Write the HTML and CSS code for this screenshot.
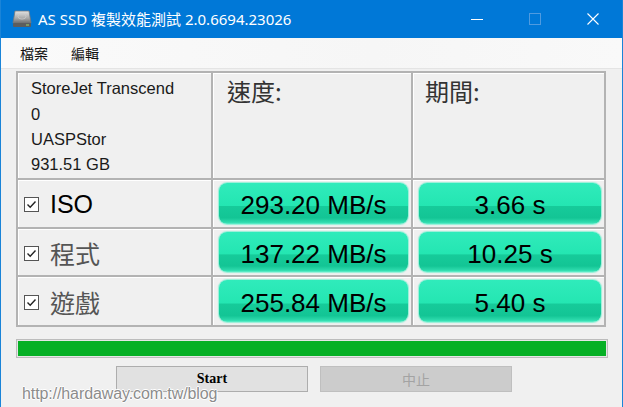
FILE: index.html
```html
<!DOCTYPE html>
<html lang="zh-Hant">
<head>
    <meta charset="UTF-8">
    <title>AS SSD 複製效能測試</title>
    <link rel="stylesheet" href="styles.css">
</head>
<body>
<div class="window">
    <div class="titlebar">
        <svg class="app-icon" width="20" height="18" viewBox="0 0 20 18">
            <defs>
                <linearGradient id="drive" x1="0" y1="0" x2="0" y2="1">
                    <stop offset="0" stop-color="#e4e4e4"/>
                    <stop offset="0.6" stop-color="#a9a9a9"/>
                    <stop offset="1" stop-color="#6f6f6f"/>
                </linearGradient>
            </defs>
            <path d="M3 1 H17 L19 13 H1 Z" fill="url(#drive)" stroke="#7a7a7a" stroke-width="0.8"/>
            <rect x="1" y="13" width="18" height="4" rx="1" fill="#5d5d5d"/>
            <rect x="14" y="14.5" width="3" height="1" fill="#9fd66a"/>
            <ellipse cx="10" cy="6.5" rx="4" ry="2.6" fill="none" stroke="#c9c9c9" stroke-width="0.8"/>
        </svg>
        <div class="title">AS SSD 複製效能測試 2.0.6694.23026</div>
        <div class="controls">
            <span class="ctl"><svg width="14" height="14" viewBox="0 0 14 14"><line x1="1" y1="7.5" x2="13" y2="7.5" stroke="#fff" stroke-width="1"/></svg></span>
            <span class="ctl"><svg width="14" height="14" viewBox="0 0 14 14"><rect x="1.5" y="1.5" width="11" height="11" fill="none" stroke="#4f9be0" stroke-width="1"/></svg></span>
            <span class="ctl"><svg width="14" height="14" viewBox="0 0 14 14"><path d="M1.5 1.5 L12.5 12.5 M12.5 1.5 L1.5 12.5" stroke="#fff" stroke-width="1.1"/></svg></span>
        </div>
    </div>
    <div class="menubar">
        <span class="menu-item">檔案</span>
        <span class="menu-item">編輯</span>
    </div>
    <div class="content">
        <div class="results">
            <div class="cell drive-info">
                <div class="info-line">StoreJet Transcend</div>
                <div class="info-line">0</div>
                <div class="info-line">UASPStor</div>
                <div class="info-line last">931.51 GB</div>
            </div>
            <div class="cell head">速度:</div>
            <div class="cell head head-time">期間:</div>

            <div class="cell label">
                <span class="check"><svg width="15" height="15" viewBox="0 0 15 15"><rect x="0.5" y="0.5" width="14" height="14" fill="#fff" stroke="#555"/><path d="M3.5 7.5 L6.2 10.2 L11.5 4.5" fill="none" stroke="#222" stroke-width="1.4"/></svg></span>
                <span class="label-text latin">ISO</span>
            </div>
            <div class="cell result"><div class="pill">293.20 MB/s</div></div>
            <div class="cell result"><div class="pill">3.66 s</div></div>

            <div class="cell label">
                <span class="check"><svg width="15" height="15" viewBox="0 0 15 15"><rect x="0.5" y="0.5" width="14" height="14" fill="#fff" stroke="#555"/><path d="M3.5 7.5 L6.2 10.2 L11.5 4.5" fill="none" stroke="#222" stroke-width="1.4"/></svg></span>
                <span class="label-text">程式</span>
            </div>
            <div class="cell result"><div class="pill">137.22 MB/s</div></div>
            <div class="cell result"><div class="pill">10.25 s</div></div>

            <div class="cell label">
                <span class="check"><svg width="15" height="15" viewBox="0 0 15 15"><rect x="0.5" y="0.5" width="14" height="14" fill="#fff" stroke="#555"/><path d="M3.5 7.5 L6.2 10.2 L11.5 4.5" fill="none" stroke="#222" stroke-width="1.4"/></svg></span>
                <span class="label-text">遊戲</span>
            </div>
            <div class="cell result"><div class="pill">255.84 MB/s</div></div>
            <div class="cell result"><div class="pill">5.40 s</div></div>
        </div>

        <div class="progress"><div class="progress-fill"></div></div>

        <div class="buttons">
            <button class="btn">Start</button>
            <button class="btn disabled">中止</button>
        </div>
    </div>
    <div class="watermark">http://hardaway.com.tw/blog</div>
</div>
</body>
</html>
```

FILE: styles.css
```css
*{
    margin: 0;
    padding: 0;
    box-sizing: border-box;
}
body{
    width: 623px;
    height: 407px;
    overflow: hidden;
    background: #f0f0f0;
    font-family: "Liberation Sans", Arial, "Noto Sans CJK TC", sans-serif;
}
.window{
    position: relative;
    width: 623px;
    height: 407px;
    border-left: 1px solid #1a84d8;
    border-right: 1px solid #1a84d8;
    background: #f0f0f0;
}
.titlebar{
    height: 38px;
    background: #0078d7;
    display: flex;
    align-items: center;
    color: #fff;
}
.app-icon{
    margin-left: 11px;
    margin-top: -1px;
}
.title{
    margin-left: 6px;
    font-family: "Noto Sans", "Noto Sans CJK TC", sans-serif;
    font-size: 15px;
    margin-top: -1px;
}
.controls{
    margin-left: auto;
    display: flex;
}
.ctl{
    width: 58px;
    height: 38px;
    display: flex;
    align-items: center;
    justify-content: center;
}
.ctl svg{
    margin-top: -1px;
}
.menubar{
    height: 31px;
    background: linear-gradient(to right, #fafafa, #f6f6f6 60%, #f9f9f9);
    border-bottom: 1px solid #e4e4e4;
    display: flex;
    align-items: center;
    padding-left: 19px;
}
.menu-item{
    font-family: "Noto Sans CJK TC", sans-serif;
    font-size: 14px;
    color: #111;
    margin-right: 23px;
    margin-top: -1px;
}
.content{
    padding-left: 15px;
    padding-top: 2px;
}
.results{
    width: 590px;
    display: grid;
    grid-template-columns: 193px 198px 191px;
    grid-template-rows: 105px 47px 46px 48px;
    gap: 2px;
    border: 2px solid #b3b3b3;
    background: #b3b3b3;
}
.cell{
    background: #f0f0f0;
    border-top: 1px solid #fff;
    border-left: 1px solid #fff;
}
.drive-info{
    padding: 2px 0 0 12px;
    font-size: 16.5px;
    color: #1a1a1a;
}
.info-line{
    line-height: 25.5px;
}
.info-line.last{
    line-height: 22px;
}
.head{
    font-family: "Noto Sans CJK TC", sans-serif;
    font-size: 24px;
    color: #333;
    padding: 0 0 0 13px;
    line-height: 34px;
}
.head-time{
    padding-left: 11px;
}
.label{
    display: flex;
    align-items: center;
    padding-left: 5px;
}
.check{
    display: flex;
    width: 15px;
    height: 15px;
    margin-right: 11px;
    margin-top: 1px;
}
.label-text{
    font-family: "Noto Sans CJK TC", sans-serif;
    font-size: 25px;
    color: #555;
}
.label-text.latin{
    font-family: "Liberation Sans", Arial, sans-serif;
    color: #000;
    font-size: 25px;
}
.result{
    padding: 2px 3px 3px 5px;
}
.pill{
    height: 100%;
    border-radius: 8px;
    background: linear-gradient(to bottom, #30ebbb 0%, #24e6b2 55%, #16cb9a 57%, #13c595 85%, #2fdcae 96%, #63efcc 100%);
    box-shadow: 0 0 1px 1px rgba(110, 240, 205, 0.7);
    display: flex;
    align-items: center;
    justify-content: center;
    font-size: 26px;
    color: #000;
    padding-top: 4px;
}
.progress{
    margin-top: 12px;
    width: 592px;
    height: 19px;
    border: 1px solid #bcbcbc;
    background: #e6e6e6;
    padding: 1px;
}
.progress-fill{
    height: 100%;
    background: #06b025;
}
.buttons{
    display: flex;
    gap: 12px;
    margin-top: 8px;
    padding-left: 100px;
}
.btn{
    width: 192px;
    height: 26px;
    border: 1px solid #adadad;
    background: #e1e1e1;
    font-family: "Liberation Serif", "Times New Roman", serif;
    font-weight: bold;
    font-size: 14px;
    color: #000;
}
.btn.disabled{
    background: #cccccc;
    border-color: #bfbfbf;
    color: #a3a3a3;
    font-family: "Noto Sans CJK TC", sans-serif;
    font-weight: normal;
}
.watermark{
    position: absolute;
    left: 21px;
    top: 385px;
    font-family: "Liberation Sans", Arial, sans-serif;
    font-size: 16px;
    color: #8c8c8c;
    letter-spacing: -0.1px;
    text-shadow: 1px 0 0 #fff, -1px 0 0 #fff, 0 1px 0 #fff, 0 -1px 0 #fff;
}
```
